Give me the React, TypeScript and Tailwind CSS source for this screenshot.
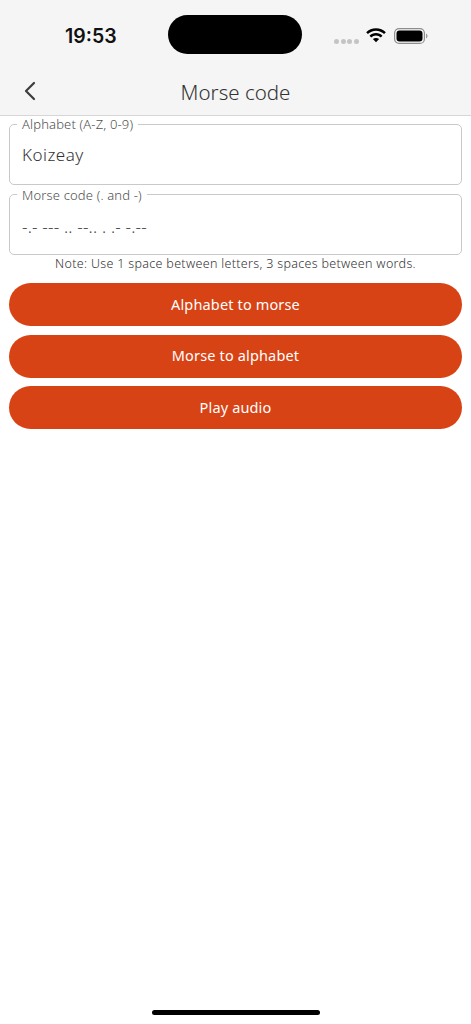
import React from "react";

const font = { fontFamily: '"Noto Sans", "Open Sans", sans-serif' };

function Field({ label, value, valueClass }: { label: string; value: string; valueClass: string }) {
  return (
    <fieldset className="h-[67.5px] rounded-[5px] border-[1.5px] border-[#c9c9c9] pl-[7px] pr-3 m-0 min-w-0">
      <legend className="px-[5px] ml-0 text-[13px] leading-[14px] tracking-[0.15px] font-light text-[#4f4f4f]">{label}</legend>
      <div className={valueClass}>{value}</div>
    </fieldset>
  );
}

function Btn({ children }: { children: string }) {
  return (
    <button className="h-[43px] w-full rounded-full bg-[#d84315] text-white text-[14.5px] tracking-[0.15px] flex items-center justify-center">
      {children}
    </button>
  );
}

export default function App() {
  return (
    <div style={font} className="w-[471px] h-[1024px] bg-white flex flex-col overflow-hidden">
      <header className="h-[116px] shrink-0 bg-[#f5f5f5] border-b-[1.5px] border-[#d6d6d6] flex flex-col">
        <div className="h-[70px] flex items-start">
          <div className="w-[168px] pt-[24px] pl-[65px] text-[19.5px] leading-6 font-semibold text-[#111]" style={{ fontFamily: '"Inter", sans-serif' }}>
            19:53
          </div>
          <div className="mt-[15px] w-[134px] h-[39px] rounded-full bg-black" />
          <div className="flex items-center pl-[32px] pt-[30px]">
            <div className="flex gap-[1.5px] mt-[9px]">
              <span className="w-[5px] h-[5px] rounded-full bg-[#c4c4c4]" />
              <span className="w-[5px] h-[5px] rounded-full bg-[#c4c4c4]" />
              <span className="w-[5px] h-[5px] rounded-full bg-[#c4c4c4]" />
              <span className="w-[5px] h-[5px] rounded-full bg-[#c4c4c4]" />
            </div>
            <svg width="20" height="15" viewBox="0 0 21 15" className="ml-[7px] -mt-[3px]">
              <path d="M10.5 0C6.4 0 2.8 1.6 0.2 4.2L2 6C4.2 3.8 7.2 2.5 10.5 2.5S16.8 3.8 19 6L20.8 4.2C18.2 1.6 14.6 0 10.5 0Z" fill="#000" />
              <path d="M10.5 5C7.8 5 5.4 6 3.7 7.8L5.5 9.6C6.8 8.3 8.6 7.5 10.5 7.5S14.2 8.3 15.5 9.6L17.3 7.8C15.6 6 13.2 5 10.5 5Z" fill="#000" />
              <path d="M10.5 10C9.2 10 8.1 10.5 7.2 11.3L10.5 14.6L13.8 11.3C12.9 10.5 11.8 10 10.5 10Z" fill="#000" />
            </svg>
            <svg width="34" height="16" viewBox="0 0 34 16" className="ml-[8px] -mt-[2px]">
              <rect x="0.6" y="0.6" width="29.8" height="14.8" rx="4.5" fill="none" stroke="#8e8e8e" strokeWidth="1.2" />
              <rect x="2.5" y="2.5" width="26" height="11" rx="3" fill="#000" />
              <path d="M32 5.5C33 5.9 33.5 6.8 33.5 8S33 10.1 32 10.5Z" fill="#9a9a9a" />
            </svg>
          </div>
        </div>
        <div className="relative h-[45px] flex items-center justify-center text-[20.5px] font-light text-[#333]">
          <svg width="14" height="22" viewBox="0 0 14 22" className="absolute left-[23px] top-[10px]" fill="none" stroke="#3c3c3c" strokeWidth="2.2" strokeLinecap="round" strokeLinejoin="round">
            <path d="M11 3L3 11L11 19" />
          </svg>
          <span>Morse code</span>
        </div>
      </header>
      <main className="flex flex-col px-[9px] pt-[1px]">
        <div className="flex flex-col gap-[3px]">
          <Field label="Alphabet (A-Z, 0-9)" value="Koizeay" valueClass="pl-[5px] pt-[12px] text-[17px] leading-6 tracking-[0.5px] font-light text-[#333]" />
          <Field label="Morse code (. and -)" value="-.- --- .. --.. . .- -.--" valueClass="pl-[5px] pt-[13px] text-[17px] leading-6 tracking-[0.2px] font-light text-[#444]" />
        </div>
        <p className="h-[18px] text-center text-[12.5px] leading-[18px] tracking-[0.32px] font-light text-[#333]">
          Note: Use 1 space between letters, 3 spaces between words.
        </p>
        <div className="mt-[10px] flex flex-col gap-[8.5px]">
          <Btn>Alphabet to morse</Btn>
          <Btn>Morse to alphabet</Btn>
          <Btn>Play audio</Btn>
        </div>
      </main>
      <div className="mt-auto mb-[9px] mx-auto w-[168px] h-[5px] rounded-full bg-black shrink-0" />
    </div>
  );
}
